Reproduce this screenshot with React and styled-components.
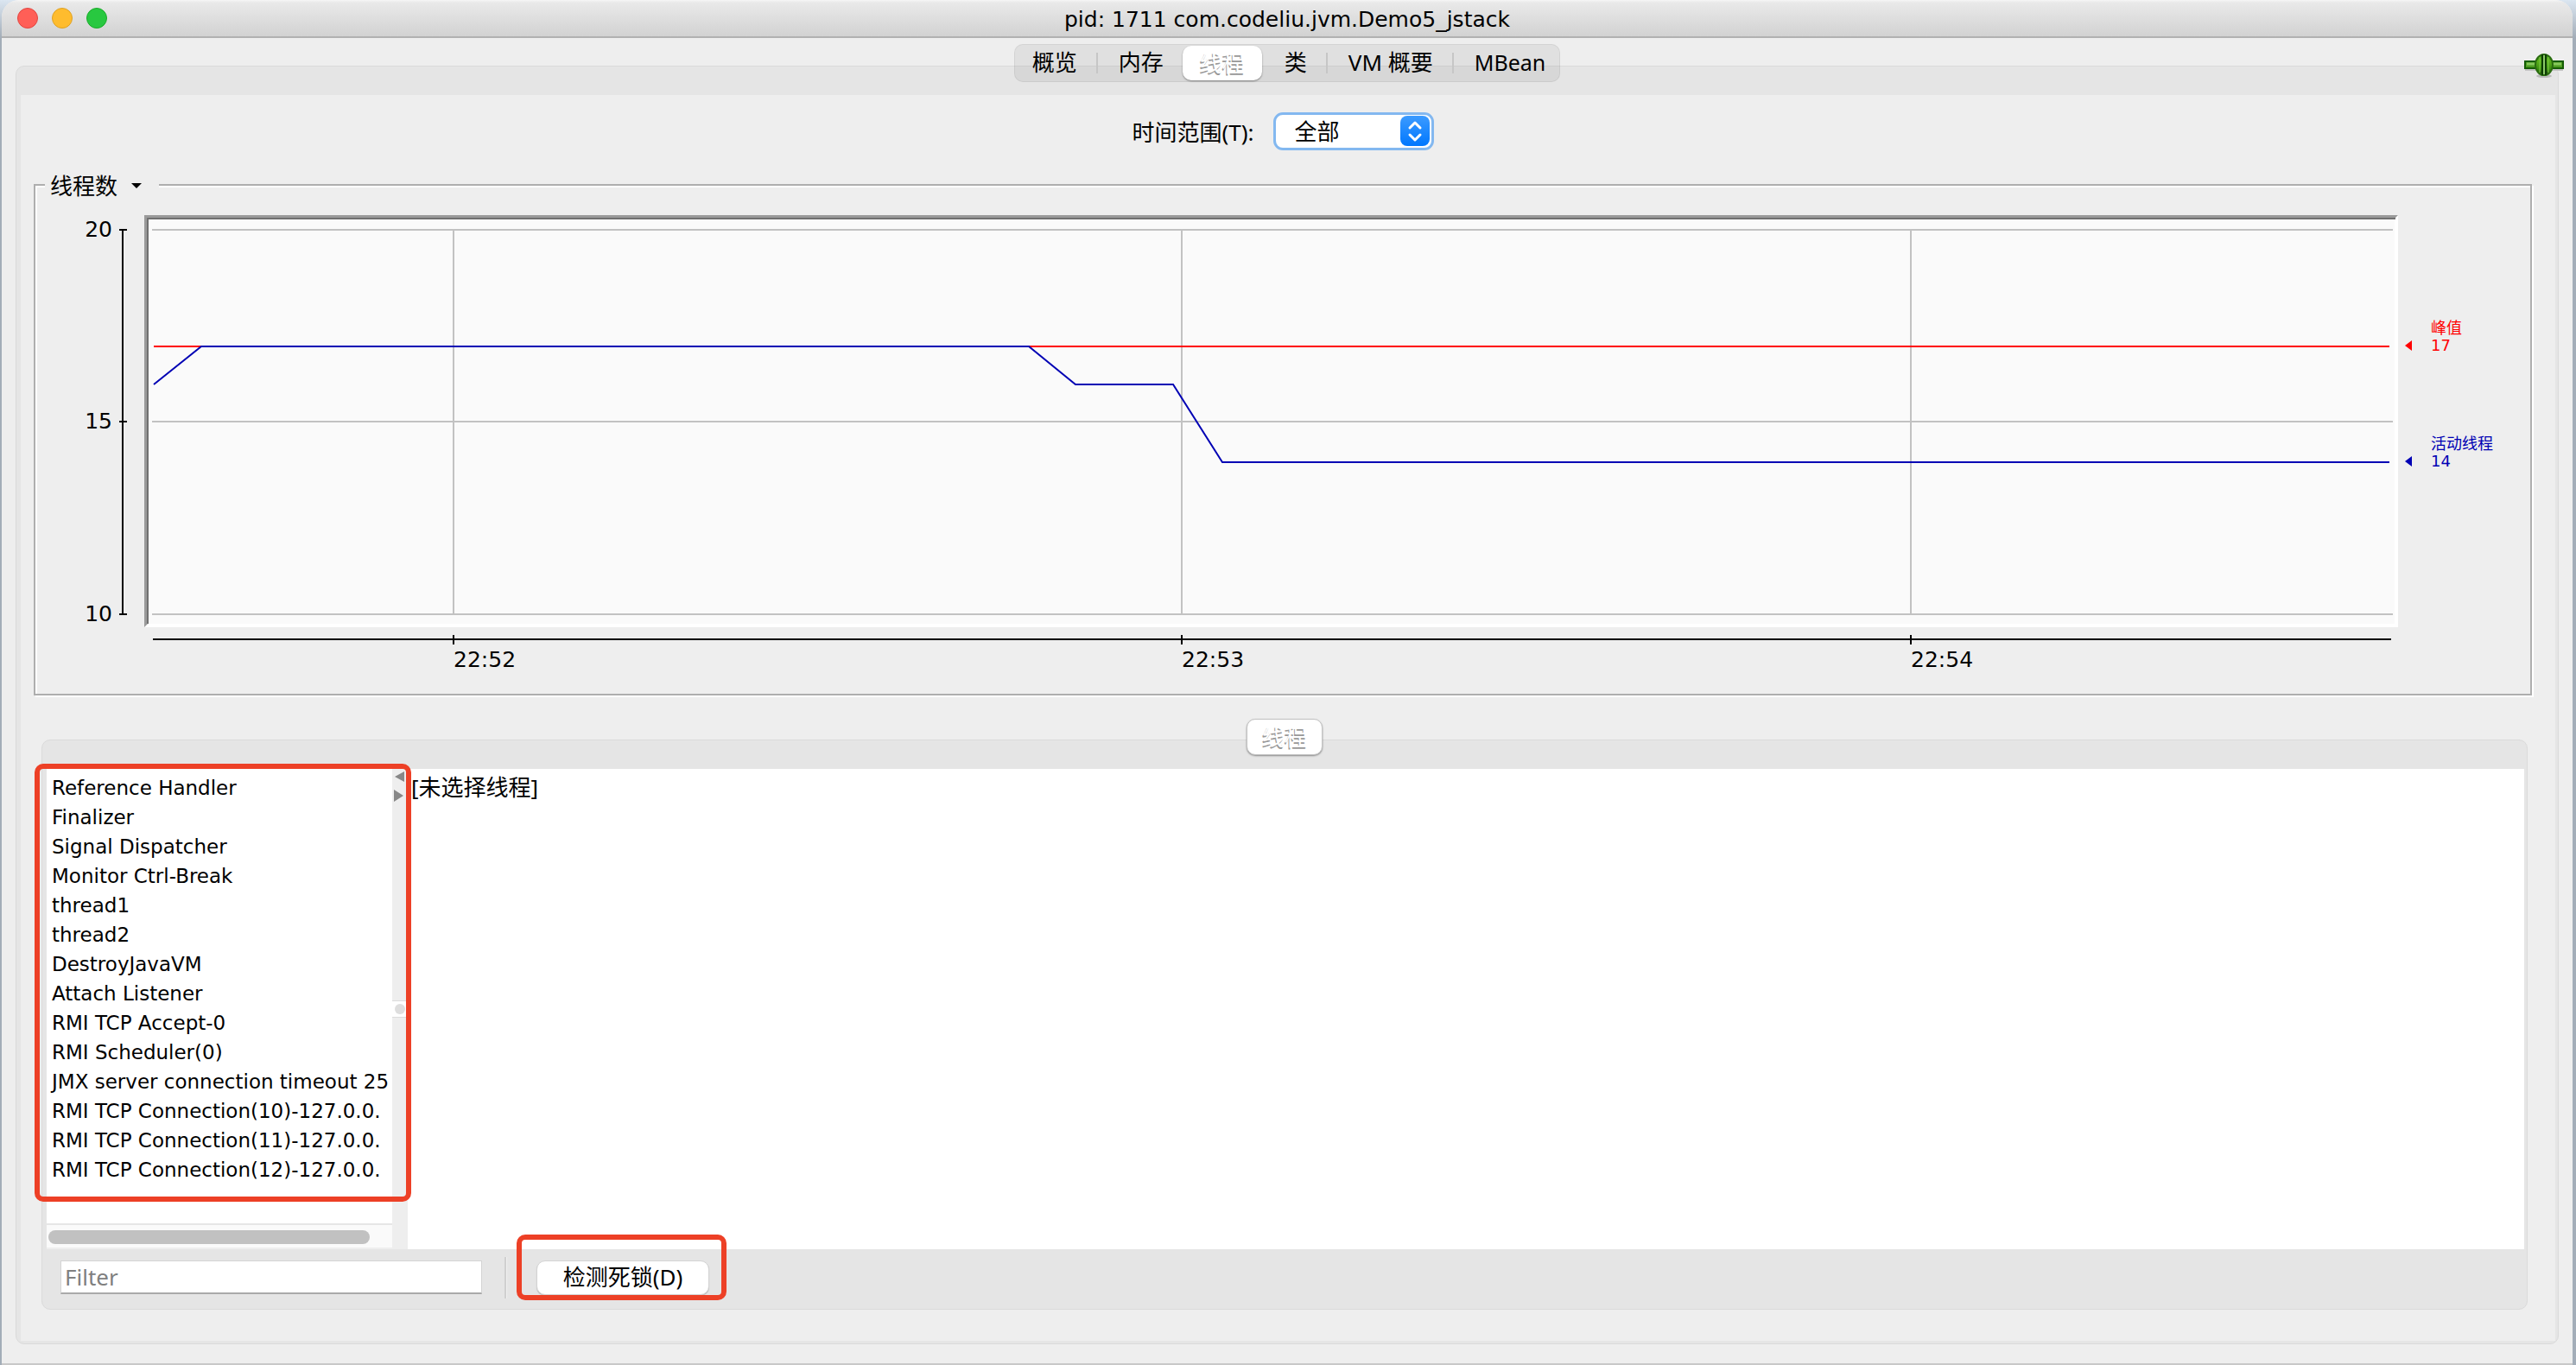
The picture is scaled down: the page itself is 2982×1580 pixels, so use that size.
import React from "react";
import styled, { createGlobalStyle } from "styled-components";

const uiFont = '"Noto Sans", "Noto Sans CJK SC", sans-serif';
const wideFont = '"DejaVu Sans", "Noto Sans CJK SC", sans-serif';

const GlobalStyle = createGlobalStyle`
  *, *::before, *::after { box-sizing: border-box; }
  body {
    margin: 0;
    background: linear-gradient(#dbe6f1 0, #a3adb8 44px, #a3adb8 100%);
    font-family: ${uiFont};
    font-size: 26px;
    line-height: 34px;
    color: #000;
  }
  button, input, select { font: inherit; color: inherit; }
`;

const Window = styled.div`
  display: flex;
  flex-direction: column;
  min-height: 100vh;
  margin: 0 4px 0 2px;
  border-bottom: 2px solid #c8c8c8;
  border-radius: 20px 20px 0 0;
  background: #eee;
  overflow: hidden;
`;

const TitleBar = styled.header`
  display: grid;
  grid-template-columns: 1fr auto 1fr;
  align-items: center;
  height: 44px;
  padding: 0 18px;
  border-bottom: 2px solid #b1b1b1;
  background: linear-gradient(#f6f6f6 0, #e9e9e9 3px, #d2d2d2 100%);
`;

const Lights = styled.div`
  display: flex;
  gap: 16px;
`;

const Light = styled.button`
  width: 24px;
  height: 24px;
  padding: 0;
  border: 1px solid ${(p) => p.$edge};
  border-radius: 50%;
  background: ${(p) => p.$fill};
`;

const Title = styled.h1`
  margin: 0;
  padding-top: 4px;
  font-family: ${wideFont};
  font-size: 25px;
  font-weight: 400;
`;

const Body = styled.main`
  position: relative;
  display: flex;
  flex: 1;
  flex-direction: column;
  align-items: center;
  padding: 7px 16px 22px;
`;

const TabBar = styled.nav`
  z-index: 1;
  display: flex;
  height: 44px;
  margin-bottom: -19px;
  border: 1px solid rgba(0, 0, 0, 0.06);
  border-radius: 10px;
  background: rgba(0, 0, 0, 0.06);
`;

const Tab = styled.button`
  padding: 0 22px 2px 24px;
  border: 0;
  background: transparent;

  &:first-child { padding-left: 20px; }
  &:last-child { padding-right: 16px; font-size: 25px; }
`;

const Divider = styled.span`
  width: 2px;
  height: 24px;
  align-self: center;
  background: #c6c6c6;
`;

const ActiveTab = styled.button`
  z-index: 1;
  height: ${(p) => (p.$alone ? "42px" : "40px")};
  align-self: center;
  margin: ${(p) => (p.$alone ? "0 0 -18px" : "0 2px 0 0")};
  padding: 0 ${(p) => (p.$alone ? "17px" : "20px")};
  border: ${(p) => (p.$alone ? "1px solid #c3c3c3" : "0")};
  border-radius: 10px;
  background: #fff;
  box-shadow: 0 1px 2px rgba(0, 0, 0, 0.4);
  color: #fff;
  text-shadow: -1px 2px 0 #999;
`;

const PlugIcon = styled.svg`
  position: absolute;
  top: 16px;
  right: 8px;
  width: 48px;
  height: 32px;
`;

const OuterPanel = styled.section`
  display: flex;
  flex: 1;
  align-self: stretch;
  flex-direction: column;
  padding: 33px 3px 3px 5px;
  border: 1px solid #dadada;
  border-radius: 10px;
  background: #e5e5e5;
`;

const Page = styled.div`
  display: flex;
  flex: 1;
  flex-direction: column;
  padding: 20px 27px 36px 15px;
  background: #eee;
`;

const RangeRow = styled.div`
  display: flex;
  justify-content: center;
  align-items: center;
  gap: 22px;
  margin-bottom: 39px;
`;

const RangeLabel = styled.label`
  padding-top: 2px;
`;

const SelectBox = styled.div`
  position: relative;
  width: 186px;
  height: 44px;
`;

const RangeSelect = styled.select`
  width: 100%;
  height: 100%;
  padding: 0 44px 0 22px;
  border: 3px solid #83b8f0;
  border-radius: 11px;
  background: #fff;
  appearance: none;
`;

const SelectArrows = styled.svg`
  position: absolute;
  top: 4px;
  right: 4px;
  width: 36px;
  height: 36px;
  pointer-events: none;
`;

const GroupBox = styled.section`
  margin-bottom: 27px;
  border: 2px solid #aeaeae;
  box-shadow: inset 2px 2px 0 #fff, 2px 2px 0 #fff;
`;

const GroupTitle = styled.button`
  display: flex;
  align-items: center;
  gap: 16px;
  height: 34px;
  margin: -17px 0 0 11px;
  padding: 0 20px 0 6px;
  border: 0;
  background: #eee;
`;

const Chart = styled.svg`
  display: block;
  width: 100%;
  height: auto;
  font-family: ${wideFont};
  font-size: 25px;
`;

const ThreadSection = styled.section`
  display: flex;
  flex: 1;
  flex-direction: column;
  margin: 0 5px 0 9px;
`;

const ThreadPanel = styled.div`
  display: flex;
  flex: 1;
  flex-direction: column;
  padding: 33px 3px 0 5px;
  border: 1px solid #dadada;
  border-radius: 10px;
  background: #e5e5e5;
`;

const Split = styled.div`
  display: flex;
  flex: 1;
`;

const ListPane = styled.div`
  position: relative;
  display: flex;
  width: 418px;
  background: #eee;
`;

const ListColumn = styled.div`
  display: flex;
  flex-direction: column;
  width: 400px;
  background: #fff;
`;

const ThreadList = styled.ul`
  flex: 1;
  margin: 0;
  padding: 5px 0 0 6px;
  list-style: none;
  font-family: ${wideFont};
  font-size: 23px;
  white-space: nowrap;
`;

const ScrollTrack = styled.div`
  height: 30px;
  padding: 6px 2px;
  border-top: 2px solid #e6e6e6;
  border-bottom: 2px solid #eee;
  background: #fafafa;
`;

const ScrollThumb = styled.div`
  width: 94%;
  height: 16px;
  border-radius: 8px;
  background: #c1c1c1;
`;

const SplitBar = styled.div`
  display: flex;
  flex: 1;
  flex-direction: column;
  justify-content: space-between;
`;

const SplitArrows = styled.svg`
  display: block;
  width: 18px;
  height: 40px;
`;

const SplitHandle = styled.div`
  display: flex;
  justify-content: center;
  align-items: center;
  height: 20px;
  border: 1px solid #dcdcdc;
  border-width: 1px 0;
  background: #fff;

  &::before {
    width: 12px;
    height: 12px;
    border-radius: 50%;
    background: #dedede;
    content: "";
  }
`;

const SplitSpacer = styled.div`
  height: 40px;
`;

const Highlight = styled.div`
  position: absolute;
  inset: ${(p) => p.$inset};
  z-index: 2;
  border: 6px solid #ed4026;
  border-radius: 10px;
  pointer-events: none;
`;

const Detail = styled.div`
  flex: 1;
  padding: 4px;
  background: #fff;
`;

const Footer = styled.footer`
  display: flex;
  align-items: center;
  height: 69px;
  padding: 0 16px 4px;
`;

const FilterInput = styled.input`
  width: 488px;
  height: 39px;
  padding: 0 4px;
  border: 1px solid #d4d4d4;
  border-bottom: 2px solid #aaa;
  border-radius: 0;
  background: #fff;

  &::placeholder { color: #808080; opacity: 1; }
`;

const FooterRule = styled.div`
  width: 3px;
  height: 48px;
  margin: 0 34px 0 26px;
  border-left: 2px solid #d0d0d0;
  border-right: 1px solid #f0f0f0;
`;

const ButtonWrap = styled.div`
  position: relative;
`;

const PushButton = styled.button`
  display: block;
  width: 200px;
  height: 40px;
  padding: 0 0 2px;
  border: 1px solid #d4d4d4;
  border-radius: 10px;
  background: #fff;
  box-shadow: 0 1px 1px rgba(0, 0, 0, 0.2);
`;

const threads = [
  "Reference Handler",
  "Finalizer",
  "Signal Dispatcher",
  "Monitor Ctrl-Break",
  "thread1",
  "thread2",
  "DestroyJavaVM",
  "Attach Listener",
  "RMI TCP Accept-0",
  "RMI Scheduler(0)",
  "JMX server connection timeout 25",
  "RMI TCP Connection(10)-127.0.0.",
  "RMI TCP Connection(11)-127.0.0.",
  "RMI TCP Connection(12)-127.0.0.",
];

const levels = [
  { label: "20", y: 266 },
  { label: "15", y: 488 },
  { label: "10", y: 711 },
];

const times = [
  { label: "22:52", x: 525 },
  { label: "22:53", x: 1368 },
  { label: "22:54", x: 2212 },
];

const series = [
  { name: "峰值", value: 17, y: 401, color: "#f00", points: "178,401 2766,401" },
  {
    name: "活动线程",
    value: 14,
    y: 535,
    color: "#0000b4",
    points: "178,445 233,401 1191,401 1245,445 1358,445 1415,535 2766,535",
  },
];

function ThreadChart() {
  return (
    <Chart viewBox="41 232 2888 571" role="img" aria-label="线程数">
      <rect x="167" y="249" width="2609" height="477" fill="#fff" />
      <path d="M167 726V249H2776L2771 254H172V721Z" fill="#9a9a9a" />
      <path d="M171 722V253H2773" fill="none" stroke="#707070" strokeWidth="2" />
      <rect x="172" y="254" width="2600" height="468" fill="#fafafa" />
      <g stroke="#c2c2c2" strokeWidth="2">
        {levels.map((l) => (
          <path key={l.label} d={`M176 ${l.y}H2770`} />
        ))}
        {times.map((t) => (
          <path key={t.label} d={`M${t.x} 266V711`} />
        ))}
      </g>
      {series.map((s) => (
        <g key={s.name}>
          <polyline points={s.points} fill="none" stroke={s.color} strokeWidth="2" />
          <path d={`M2784 ${s.y - 1}l8 -6v12z`} fill={s.color} />
          <text x="2814" y={s.y - 15} fontSize="18" fill={s.color}>{s.name}</text>
          <text x="2814" y={s.y + 5} fontSize="18" fill={s.color}>{s.value}</text>
        </g>
      ))}
      <g stroke="#000" strokeWidth="2">
        <path d="M142 266V711" />
        <path d="M138 266h9M138 488h9M138 711h9" />
        <path d="M177 740H2768" />
        {times.map((t) => (
          <path key={t.label} d={`M${t.x} 735v11`} />
        ))}
      </g>
      {levels.map((l) => (
        <text key={l.label} x="130" y={l.y + 8} textAnchor="end">{l.label}</text>
      ))}
      {times.map((t) => (
        <text key={t.label} x={t.x} y="772">{t.label}</text>
      ))}
    </Chart>
  );
}

export default function App() {
  return (
    <>
      <GlobalStyle />
      <Window>
        <TitleBar>
          <Lights>
            <Light $fill="#ff5f57" $edge="#e14640" aria-label="关闭" />
            <Light $fill="#febc2e" $edge="#dea123" aria-label="最小化" />
            <Light $fill="#28c840" $edge="#1aab29" aria-label="缩放" />
          </Lights>
          <Title>pid: 1711 com.codeliu.jvm.Demo5_jstack</Title>
        </TitleBar>
        <Body>
          <TabBar>
            <Tab>概览</Tab>
            <Divider />
            <Tab>内存</Tab>
            <ActiveTab>线程</ActiveTab>
            <Tab>类</Tab>
            <Divider />
            <Tab>VM 概要</Tab>
            <Divider />
            <Tab>MBean</Tab>
          </TabBar>
          <PlugIcon viewBox="0 0 48 32" aria-hidden="true">
            <defs>
              <linearGradient id="plug" x1="0" y1="0" x2="0" y2="1">
                <stop offset="0" stopColor="#2f8a0c" />
                <stop offset="0.3" stopColor="#5cb41c" />
                <stop offset="0.7" stopColor="#3c9010" />
                <stop offset="1" stopColor="#123c08" />
              </linearGradient>
            </defs>
            <ellipse cx="23" cy="28" rx="9" ry="2" fill="#bbb" />
            <path d="M1 21h44" stroke="#c4c4c4" strokeWidth="2" />
            <rect x="1" y="11" width="44" height="8" fill="#4c9c20" stroke="#145c04" strokeWidth="2" />
            <path d="M3 14h40" stroke="#86c85c" strokeWidth="3" />
            <ellipse cx="23" cy="15" rx="10" ry="12" fill="url(#plug)" stroke="#2a6c10" strokeWidth="2" />
            <path d="M18 6v18M28 6v18" stroke="#78c440" strokeWidth="2" opacity="0.6" />
            <path d="M21 3v24M25 3v24" stroke="#0c3c04" strokeWidth="2" />
            <path d="M23 4v22" stroke="#8cc868" strokeWidth="2" />
          </PlugIcon>
          <OuterPanel>
            <Page>
              <RangeRow>
                <RangeLabel htmlFor="range">时间范围(T):</RangeLabel>
                <SelectBox>
                  <RangeSelect id="range" defaultValue="all">
                    <option value="all">全部</option>
                  </RangeSelect>
                  <SelectArrows viewBox="0 0 36 36" aria-hidden="true">
                    <defs>
                      <linearGradient id="blue" x1="0" y1="0" x2="0" y2="1">
                        <stop offset="0" stopColor="#3c9bff" />
                        <stop offset="1" stopColor="#0077fe" />
                      </linearGradient>
                    </defs>
                    <rect x="1" y="0" width="34" height="35" rx="8" fill="url(#blue)" />
                    <path d="M12 14l6-6 6 6M12 22l6 6 6-6" fill="none" stroke="#fff" strokeWidth="3" strokeLinecap="round" strokeLinejoin="round" />
                  </SelectArrows>
                </SelectBox>
              </RangeRow>
              <GroupBox>
                <GroupTitle>
                  线程数
                  <svg width="12" height="6" viewBox="0 0 12 6" aria-hidden="true">
                    <path d="M0 0h12L6 6z" />
                  </svg>
                </GroupTitle>
                <ThreadChart />
              </GroupBox>
              <ThreadSection>
                <ActiveTab $alone>线程</ActiveTab>
                <ThreadPanel>
                  <Split>
                    <ListPane>
                      <ListColumn>
                        <ThreadList>
                          {threads.map((name) => (
                            <li key={name}>{name}</li>
                          ))}
                        </ThreadList>
                        <ScrollTrack>
                          <ScrollThumb />
                        </ScrollTrack>
                      </ListColumn>
                      <SplitBar>
                        <SplitArrows viewBox="0 0 18 40" aria-hidden="true">
                          <path d="M3 9l11-6v12zM2 24l11 7-11 7z" fill="#888" />
                        </SplitArrows>
                        <SplitHandle />
                        <SplitSpacer />
                      </SplitBar>
                      <Highlight $inset="-6px -4px 55px -14px" />
                    </ListPane>
                    <Detail>[未选择线程]</Detail>
                  </Split>
                  <Footer>
                    <FilterInput placeholder="Filter" aria-label="Filter" />
                    <FooterRule />
                    <ButtonWrap>
                      <PushButton>检测死锁(D)</PushButton>
                      <Highlight $inset="-30px -20px -6px -23px" />
                    </ButtonWrap>
                  </Footer>
                </ThreadPanel>
              </ThreadSection>
            </Page>
          </OuterPanel>
        </Body>
      </Window>
    </>
  );
}
